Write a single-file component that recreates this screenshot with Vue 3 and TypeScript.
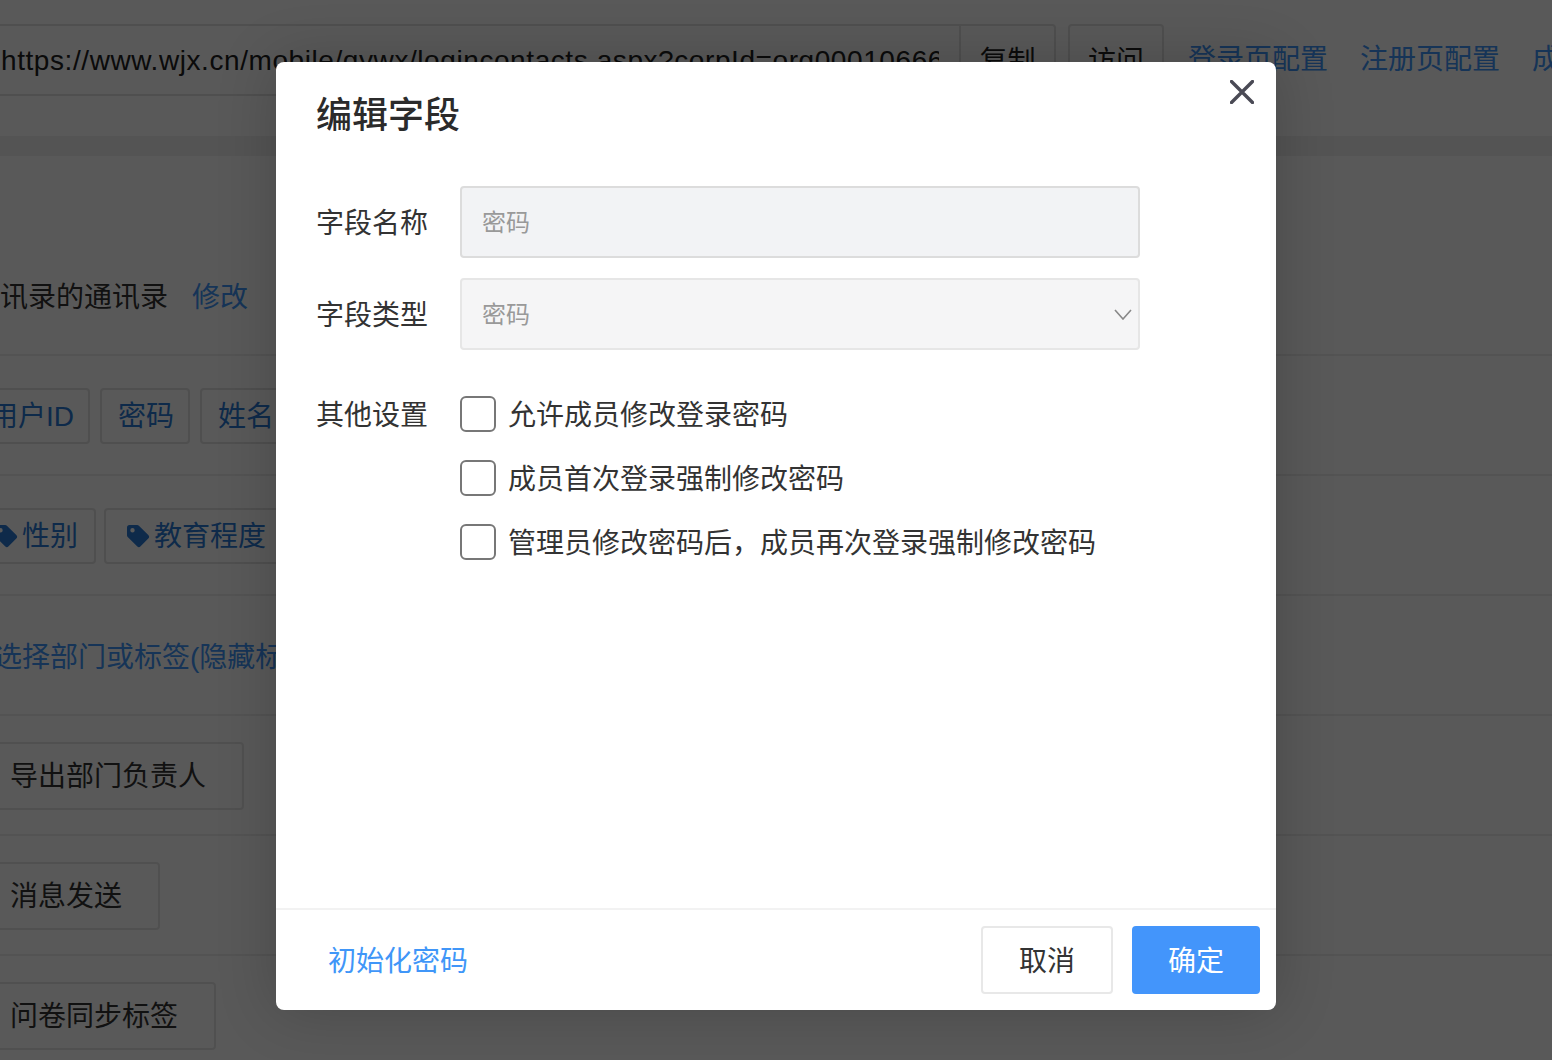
<script setup lang="ts">
const checks: string[] = [
  '允许成员修改登录密码',
  '成员首次登录强制修改密码',
  '管理员修改密码后，成员再次登录强制修改密码',
]
</script>

<template>
  <div class="page">
    <div class="top">
      <div class="url">
        <span class="url-text">https://www.wjx.cn/mobile/qywx/logincontacts.aspx?corpId=org00010666(</span>
      </div>
      <div class="addon">复制</div>
      <div class="addon visit">访问</div>
      <a class="link first">登录页配置</a>
      <a class="link">注册页配置</a>
      <a class="link">成员页配置</a>
    </div>
    <div class="band"></div>
    <div class="book">
      <span>讯录的通讯录</span>
      <a class="link edit">修改</a>
    </div>
    <div class="row fields">
      <span class="tag">用户ID</span>
      <span class="tag">密码</span>
      <span class="tag">姓名</span>
    </div>
    <div class="row labels">
      <span class="tag icon-tag">
        <svg class="tag-icon" viewBox="0 0 24 24"><path d="M1 3.5A2.5 2.5 0 0 1 3.5 1h7.6c.7 0 1.3.3 1.8.7l9.4 9.4a2.5 2.5 0 0 1 0 3.5l-7.7 7.7a2.5 2.5 0 0 1-3.5 0L1.7 12.9A2.5 2.5 0 0 1 1 11.1Zm5.5 5a2.2 2.2 0 1 0 0-4.4 2.2 2.2 0 0 0 0 4.4Z" fill-rule="evenodd" /></svg>
        性别
      </span>
      <span class="tag icon-tag">
        <svg class="tag-icon" viewBox="0 0 24 24"><path d="M1 3.5A2.5 2.5 0 0 1 3.5 1h7.6c.7 0 1.3.3 1.8.7l9.4 9.4a2.5 2.5 0 0 1 0 3.5l-7.7 7.7a2.5 2.5 0 0 1-3.5 0L1.7 12.9A2.5 2.5 0 0 1 1 11.1Zm5.5 5a2.2 2.2 0 1 0 0-4.4 2.2 2.2 0 0 0 0 4.4Z" fill-rule="evenodd" /></svg>
        教育程度
      </span>
    </div>
    <div class="row select-link">
      <a class="link">选择部门或标签(隐藏标签)</a>
    </div>
    <div class="row"><span class="btn wide">导出部门负责人</span></div>
    <div class="row"><span class="btn">消息发送</span></div>
    <div class="row"><span class="btn">问卷同步标签</span></div>

    <div class="mask"></div>

    <div class="modal">
      <button class="close" aria-label="关闭">
        <svg viewBox="0 0 24 24" width="24" height="24"><path d="M1.5 1.5 22.5 22.5M22.5 1.5 1.5 22.5" /></svg>
      </button>
      <div class="body">
        <h2 class="title">编辑字段</h2>
        <div class="form-row">
          <label class="label">字段名称</label>
          <div class="control name">密码</div>
        </div>
        <div class="form-row">
          <label class="label">字段类型</label>
          <div class="control type">
            密码
            <svg class="chevron" viewBox="0 0 18 11" width="18" height="11"><path d="M1 1 9 10 17 1" /></svg>
          </div>
        </div>
        <div class="other">
          <label class="label other-label">其他设置</label>
          <div class="checks">
            <div v-for="c in checks" :key="c" class="check">
              <span class="box"></span>
              <span class="check-text">{{ c }}</span>
            </div>
          </div>
        </div>
      </div>
      <div class="footer">
        <a class="reset">初始化密码</a>
        <div class="actions">
          <button class="cancel">取消</button>
          <button class="ok">确定</button>
        </div>
      </div>
    </div>
  </div>
</template>

<style>
html, body { margin: 0; background: #fff; overflow: hidden; }
</style>

<style scoped>
.page {
  position: relative;
  width: 1552px;
  height: 1060px;
  overflow: hidden;
  background: #fff;
  font-family: "Liberation Sans", "Noto Sans CJK SC", sans-serif;
  font-size: 28px;
  color: #333;
}
.top {
  box-sizing: border-box;
  height: 136px;
  padding-top: 24px;
  display: flex;
  align-items: flex-start;
  white-space: nowrap;
}
.url {
  box-sizing: border-box;
  flex: none;
  width: 965px;
  height: 72px;
  margin-left: -4px;
  padding: 0 20px 0 3px;
  border: 2px solid #e2e2e2;
  line-height: 70px;
  overflow: hidden;
  color: #222;
}
.url-text { display: block; overflow: hidden; letter-spacing: .58px; }
.addon {
  box-sizing: border-box;
  flex: none;
  width: 95px;
  height: 72px;
  border: 2px solid #e2e2e2;
  border-left-width: 0;
  border-radius: 0 4px 4px 0;
  line-height: 71px;
  text-align: center;
  color: #222;
}
.visit { margin-left: 12px; width: 96px; border-left-width: 2px; border-radius: 4px; }
.link { color: #4096f8; flex: none; line-height: 72px; margin-right: 32px; }
.link.first { margin-left: 24px; }
.band { height: 20px; background: #f0f0f0; }
.book {
  box-sizing: border-box;
  height: 200px;
  padding-top: 122px;
  line-height: 40px;
  border-bottom: 2px solid #eee;
  color: #333;
  display: flex;
  white-space: nowrap;
}
.book .link.edit { margin: 0 0 0 24px; line-height: 40px; }
.row {
  box-sizing: border-box;
  height: 120px;
  padding-top: 2px;
  border-bottom: 2px solid #eee;
  display: flex;
  align-items: center;
  white-space: nowrap;
}
.tag {
  box-sizing: border-box;
  height: 56px;
  flex: none;
  padding: 2px 16px 0;
  border: 2px solid #e2e2e2;
  border-radius: 4px;
  line-height: 48px;
  color: #2879d4;
  display: flex;
  align-items: center;
}
.fields { margin-left: -28px; gap: 10px; }
.fields .tag { padding-right: 14px; }
.labels { margin-left: -28px; gap: 8px; }
.icon-tag { padding-left: 20px; gap: 4px; }
.tag-icon { width: 24px; height: 24px; fill: currentColor; flex: none; margin-top: -2px; }
.select-link { padding-top: 6px; margin-left: -6px; }
.select-link .link { line-height: 40px; margin: 0; }
.btn {
  box-sizing: border-box;
  height: 68px;
  margin-left: -28px;
  padding: 0 36px;
  border: 2px solid #e6e6e6;
  border-radius: 4px;
  line-height: 66px;
  color: #333;
}
.mask {
  position: absolute;
  inset: 0;
  background: rgba(0, 0, 0, .65);
}
.modal {
  position: absolute;
  left: 276px;
  top: 62px;
  width: 1000px;
  height: 948px;
  background: #fff;
  border-radius: 8px;
  box-shadow: 0 0 60px rgba(0, 0, 0, .2);
  display: flex;
  flex-direction: column;
  font-family: "Noto Sans CJK SC", "Liberation Sans", sans-serif;
}
.close {
  position: absolute;
  top: 18px;
  right: 22px;
  width: 24px;
  height: 24px;
  padding: 0;
  border: 0;
  background: none;
  display: block;
}
.close svg { display: block; fill: none; stroke: #4a4a55; stroke-width: 3.4; stroke-linecap: round; }
.body { flex: 1; padding: 29px 0 0 41px; margin-left: -1px; }
.title {
  margin: 0 0 53px;
  height: 42px;
  line-height: 42px;
  font-size: 36px;
  font-weight: 500;
  color: #2b2b2b;
}
.form-row { display: flex; align-items: center; margin-bottom: 20px; }
.label { width: 144px; height: 40px; flex: none; font-size: 28px; line-height: 38px; color: #333; }
.control {
  position: relative;
  box-sizing: border-box;
  width: 680px;
  height: 72px;
  padding: 0 20px;
  border-radius: 4px;
  font-size: 24px;
  line-height: 66px;
  color: #999;
}
.name { background: #f2f3f5; border: 2px solid #dcdcdc; }
.type { background: #f5f5f6; border: 2px solid #e6e6e6; }
.chevron {
  position: absolute;
  right: 6px;
  top: 29px;
  fill: none;
  stroke: #888;
  stroke-width: 1.6;
}
.other { display: flex; margin-top: 46px; }
.other-label { height: 36px; line-height: 34px; }
.checks { display: flex; flex-direction: column; gap: 28px; }
.check { display: flex; align-items: center; gap: 12px; height: 36px; color: #333; }
.check-text { line-height: 34px; margin-bottom: 2px; }
.box {
  box-sizing: border-box;
  width: 36px;
  height: 36px;
  border: 2px solid #777;
  border-radius: 6px;
  background: #fff;
  flex: none;
}
.footer {
  box-sizing: border-box;
  flex: none;
  height: 102px;
  padding: 16px 16px 16px 52px;
  border-top: 2px solid #f2f2f2;
  display: flex;
  align-items: center;
  justify-content: space-between;
}
.reset { color: #4096f8; font-size: 28px; margin-bottom: 2px; }
.actions { display: flex; gap: 19px; }
.actions button {
  box-sizing: border-box;
  height: 68px;
  padding: 0 0 3px;
  border-radius: 4px;
  font-family: inherit;
  font-size: 28px;
}
.cancel { width: 132px; background: #fff; border: 2px solid #e8e8e8; color: #333; }
.ok { width: 128px; background: #4395fb; border: 0; color: #fff; }
</style>
